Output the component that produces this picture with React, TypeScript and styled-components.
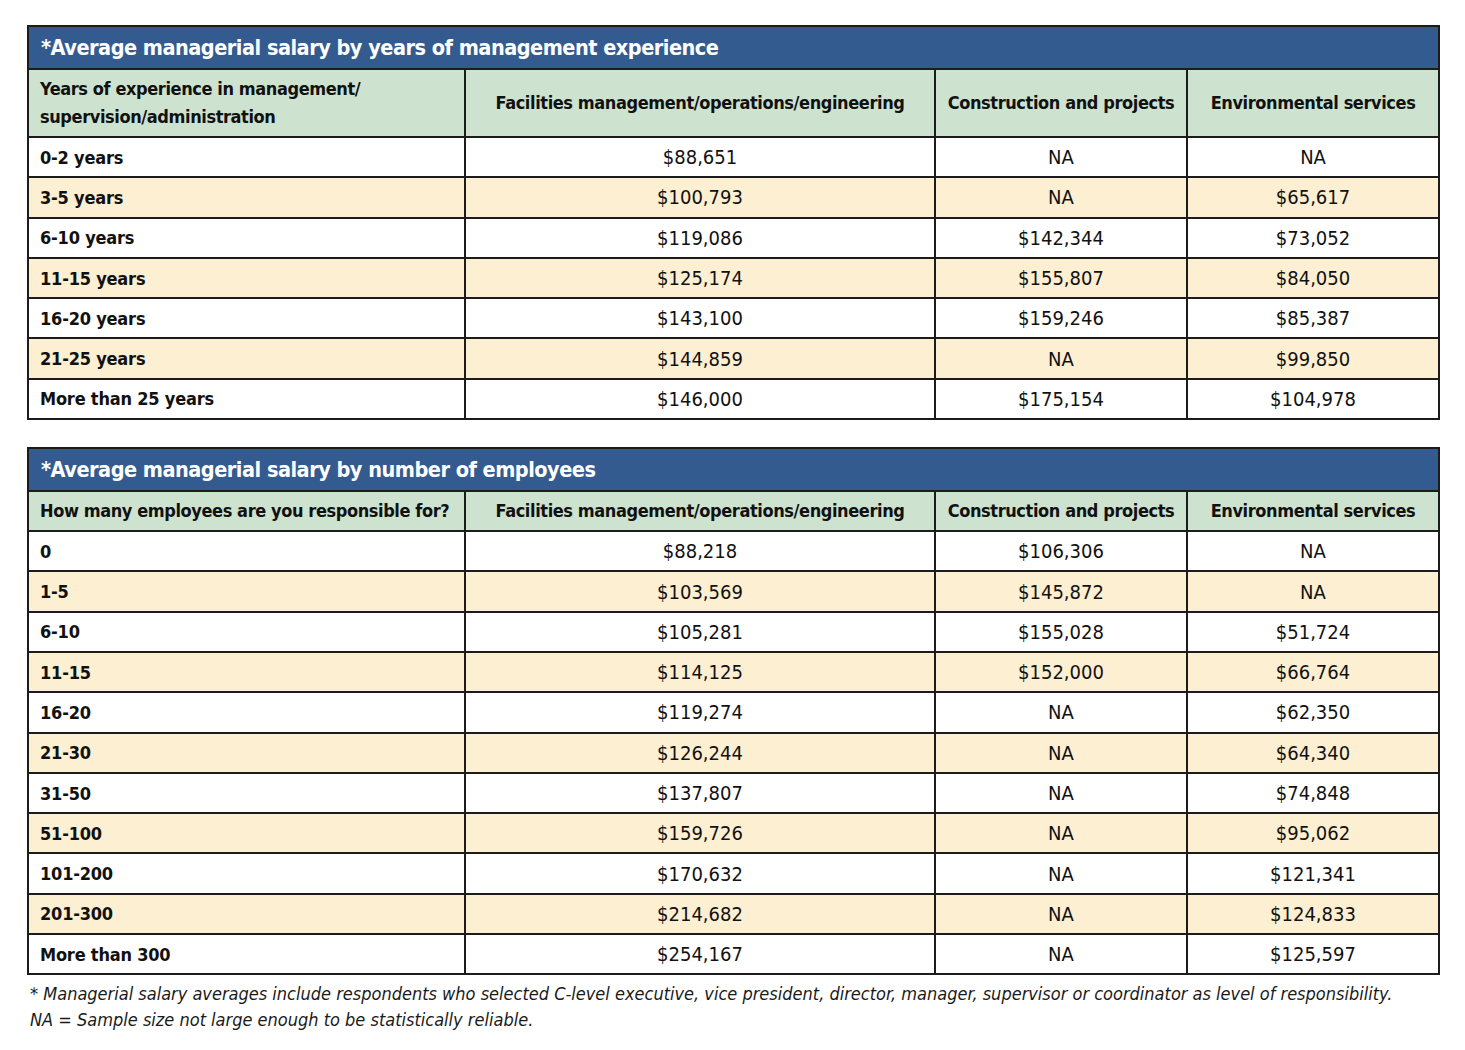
import React from 'react';
import styled, { createGlobalStyle } from 'styled-components';

const GlobalStyle = createGlobalStyle`
  html, body {
    margin: 0;
    padding: 0;
    background: #ffffff;
  }
  body {
    font-family: "DejaVu Sans Condensed", "Liberation Sans", sans-serif;
    color: #111;
  }
`;

const Page = styled.div`
  width: 1411px;
  padding: 25px 0 0 27px;
  display: flex;
  flex-direction: column;
  gap: 27px;
`;

const Table = styled.table`
  width: 1411px;
  border-collapse: collapse;
  table-layout: fixed;
  border: 2px solid #1c1c1c;
`;

const TitleCell = styled.th`
  background: #335b90;
  color: #fff;
  height: 41px;
  padding: 0 12px;
  text-align: left;
  font-size: 21.5px;
  font-weight: 700;
  letter-spacing: -0.5px;
  border: 2px solid #1c1c1c;
  border-bottom-width: 1px;
`;

const HeadCell = styled.th<{ $tall?: boolean; $left?: boolean }>`
  background: #cde3d0;
  height: ${({ $tall }) => ($tall ? '66px' : '38px')};
  padding: 0 ${({ $left }) => ($left ? '11px' : '4px')};
  text-align: ${({ $left }) => ($left ? 'left' : 'center')};
  white-space: nowrap;
  overflow: hidden;
  font-size: 18px;
  font-weight: 700;
  letter-spacing: -0.4px;
  line-height: 28px;
  border: 2px solid #1c1c1c;
`;

const Row = styled.tr<{ $shaded: boolean }>`
  background: ${({ $shaded }) => ($shaded ? '#fcefd2' : '#ffffff')};
`;

const LabelCell = styled.td`
  height: 38.3px;
  padding: 0 11px;
  font-size: 18px;
  font-weight: 700;
  letter-spacing: -0.2px;
  border: 2px solid #1c1c1c;
`;

const ValueCell = styled.td`
  height: 38.3px;
  padding: 0 8px;
  text-align: center;
  font-size: 20px;
  font-weight: 400;
  border: 2px solid #1c1c1c;
`;

const Notes = styled.div`
  margin-top: -21px;
  padding-left: 3px;
  font-style: italic;
  font-size: 18px;
  line-height: 26px;
  color: #1a1a1a;
`;

type Data = [string, string, string, string][];

const experience: Data = [
  ['0-2 years', '$88,651', 'NA', 'NA'],
  ['3-5 years', '$100,793', 'NA', '$65,617'],
  ['6-10 years', '$119,086', '$142,344', '$73,052'],
  ['11-15 years', '$125,174', '$155,807', '$84,050'],
  ['16-20 years', '$143,100', '$159,246', '$85,387'],
  ['21-25 years', '$144,859', 'NA', '$99,850'],
  ['More than 25 years', '$146,000', '$175,154', '$104,978'],
];

const employees: Data = [
  ['0', '$88,218', '$106,306', 'NA'],
  ['1-5', '$103,569', '$145,872', 'NA'],
  ['6-10', '$105,281', '$155,028', '$51,724'],
  ['11-15', '$114,125', '$152,000', '$66,764'],
  ['16-20', '$119,274', 'NA', '$62,350'],
  ['21-30', '$126,244', 'NA', '$64,340'],
  ['31-50', '$137,807', 'NA', '$74,848'],
  ['51-100', '$159,726', 'NA', '$95,062'],
  ['101-200', '$170,632', 'NA', '$121,341'],
  ['201-300', '$214,682', 'NA', '$124,833'],
  ['More than 300', '$254,167', 'NA', '$125,597'],
];

interface SalaryTableProps {
  title: string;
  firstHeader: React.ReactNode;
  tall?: boolean;
  rows: Data;
}

const SalaryTable = ({ title, firstHeader, tall, rows }: SalaryTableProps) => (
  <Table>
    <colgroup>
      <col style={{ width: 437 }} />
      <col style={{ width: 470 }} />
      <col style={{ width: 252 }} />
      <col style={{ width: 252 }} />
    </colgroup>
    <thead>
      <tr>
        <TitleCell colSpan={4}>{title}</TitleCell>
      </tr>
      <tr>
        <HeadCell $tall={tall} $left>{firstHeader}</HeadCell>
        <HeadCell $tall={tall}>Facilities management/operations/engineering</HeadCell>
        <HeadCell $tall={tall}>Construction and projects</HeadCell>
        <HeadCell $tall={tall}>Environmental services</HeadCell>
      </tr>
    </thead>
    <tbody>
      {rows.map((r, i) => (
        <Row key={r[0]} $shaded={i % 2 === 1}>
          <LabelCell>{r[0]}</LabelCell>
          <ValueCell>{r[1]}</ValueCell>
          <ValueCell>{r[2]}</ValueCell>
          <ValueCell>{r[3]}</ValueCell>
        </Row>
      ))}
    </tbody>
  </Table>
);

export default function App() {
  return (
    <>
      <GlobalStyle />
      <Page>
        <SalaryTable
          title="*Average managerial salary by years of management experience"
          firstHeader={
            <>
              Years of experience in management/
              <br />
              supervision/administration
            </>
          }
          tall
          rows={experience}
        />
        <SalaryTable
          title="*Average managerial salary by number of employees"
          firstHeader="How many employees are you responsible for?"
          rows={employees}
        />
        <Notes>
          * Managerial salary averages include respondents who selected C-level executive, vice president, director, manager, supervisor or coordinator as level of responsibility.
          <br />
          NA = Sample size not large enough to be statistically reliable.
        </Notes>
      </Page>
    </>
  );
}
